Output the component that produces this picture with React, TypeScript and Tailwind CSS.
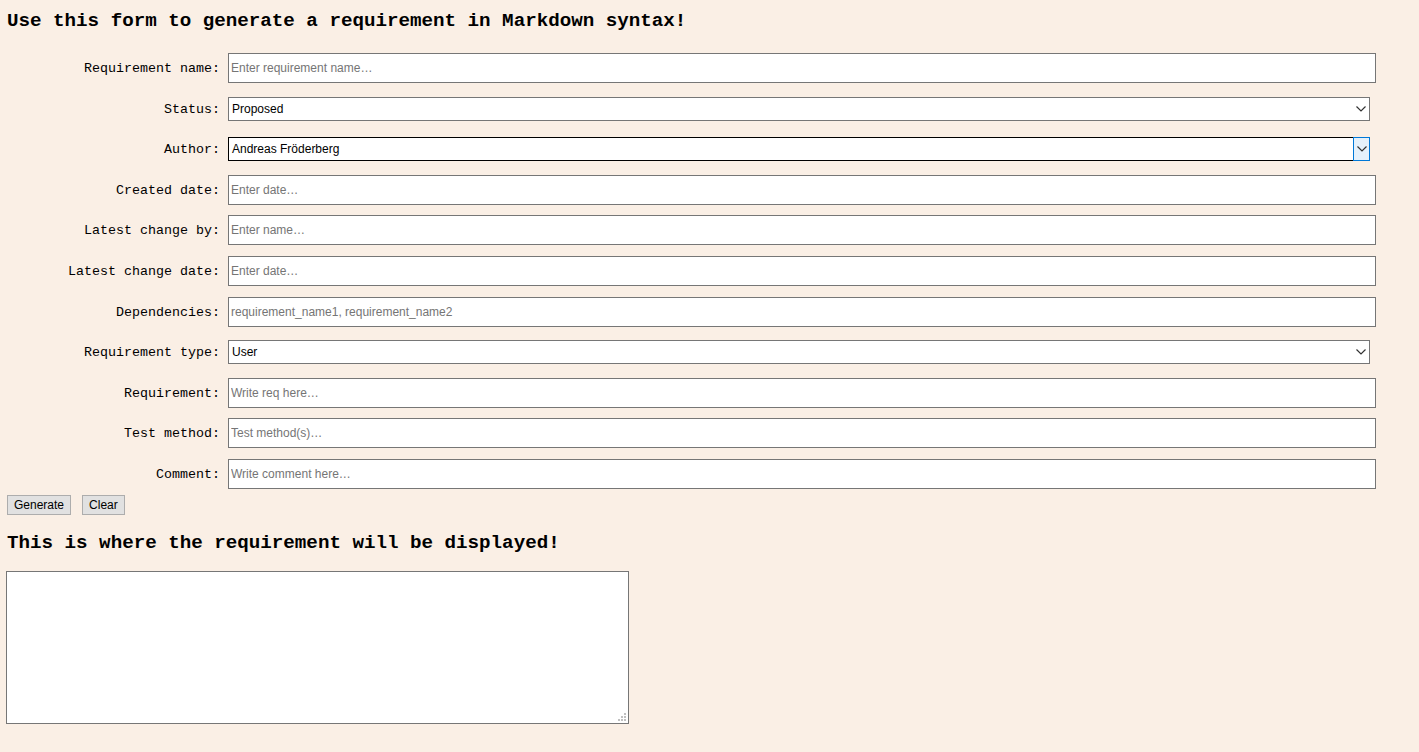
import React from "react";

const mono = { fontFamily: '"Liberation Mono", "Courier New", monospace' };
const ui = { fontFamily: '"Liberation Sans", Arial, sans-serif' };

function Chevron() {
  return (
    <svg width="10" height="6" viewBox="0 0 10 6" className="block">
      <polyline points="0.5,0.5 5,5 9.5,0.5" fill="none" stroke="#333" strokeWidth="1.2" />
    </svg>
  );
}

function TextRow({ label, placeholder }: { label: string; placeholder: string }) {
  return (
    <div className="flex items-center h-[40.6px]">
      <label className="w-[214px] pt-[2px] text-right text-[13.33px] text-black" style={mono}>
        {label}
      </label>
      <input
        type="text"
        placeholder={placeholder}
        className="ml-[8px] w-[1148px] h-[30px] border border-[#767676] bg-white px-[2px] text-[12px] text-black placeholder:text-[#757575] outline-none"
        style={ui}
      />
    </div>
  );
}

function SelectRow({ label, value, focused }: { label: string; value: string; focused?: boolean }) {
  return (
    <div className="flex items-center h-[40.6px]">
      <label className="w-[214px] pt-[2px] text-right text-[13.33px] text-black" style={mono}>
        {label}
      </label>
      <div
        className={
          focused
            ? "ml-[8px] w-[1142px] h-[24px] border border-black bg-white flex items-stretch"
            : "ml-[8px] w-[1142px] h-[24px] border border-[#767676] bg-white flex items-stretch"
        }
      >
        <div className="flex-1 flex items-center pl-[3px] text-[12px] text-black" style={ui}>
          {value}
        </div>
        {focused ? (
          <div className="w-[17px] -my-px -mr-px border border-[#0078d7] bg-[#e5f1fb] flex items-center justify-center">
            <Chevron />
          </div>
        ) : (
          <div className="w-[17px] flex items-center justify-center">
            <Chevron />
          </div>
        )}
      </div>
    </div>
  );
}

export default function App() {
  return (
    <div className="min-h-[752px] bg-[#faefe5] pl-[6px] pt-[10px]">
      <h1 className="text-[19.2px] font-bold leading-[22px] text-black pl-px" style={mono}>
        Use this form to generate a requirement in Markdown syntax!
      </h1>
      <div className="pt-[15.7px] flex flex-col">
        <TextRow label="Requirement name:" placeholder="Enter requirement name…" />
        <SelectRow label="Status:" value="Proposed" />
        <SelectRow label="Author:" value="Andreas Fröderberg" focused />
        <TextRow label="Created date:" placeholder="Enter date…" />
        <TextRow label="Latest change by:" placeholder="Enter name…" />
        <TextRow label="Latest change date:" placeholder="Enter date…" />
        <TextRow label="Dependencies:" placeholder="requirement_name1, requirement_name2" />
        <SelectRow label="Requirement type:" value="User" />
        <TextRow label="Requirement:" placeholder="Write req here…" />
        <TextRow label="Test method:" placeholder="Test method(s)…" />
        <TextRow label="Comment:" placeholder="Write comment here…" />
      </div>
      <div className="flex gap-[11px] pl-px mt-px">
        <button
          className="h-[20px] px-[6px] border border-[#adadad] bg-[#e1e1e1] text-[12px] text-black leading-none"
          style={ui}
        >
          Generate
        </button>
        <button
          className="h-[20px] px-[6px] border border-[#adadad] bg-[#e1e1e1] text-[12px] text-black leading-none"
          style={ui}
        >
          Clear
        </button>
      </div>
      <h2 className="mt-[17px] text-[19.2px] font-bold leading-[22px] text-black pl-px" style={mono}>
        This is where the requirement will be displayed!
      </h2>
      <div className="relative mt-[17px] w-[623px] h-[153px]">
        <textarea className="w-full h-full border border-[#767676] bg-white resize-none outline-none block" />
        <svg className="absolute right-[3px] bottom-[3px]" width="8" height="8" viewBox="0 0 8 8">
          <rect x="6" y="0" width="2" height="2" fill="#c0c0c0" />
          <rect x="3" y="3" width="2" height="2" fill="#c0c0c0" />
          <rect x="6" y="3" width="2" height="2" fill="#c0c0c0" />
          <rect x="0" y="6" width="2" height="2" fill="#c0c0c0" />
          <rect x="3" y="6" width="2" height="2" fill="#c0c0c0" />
          <rect x="6" y="6" width="2" height="2" fill="#c0c0c0" />
        </svg>
      </div>
    </div>
  );
}
